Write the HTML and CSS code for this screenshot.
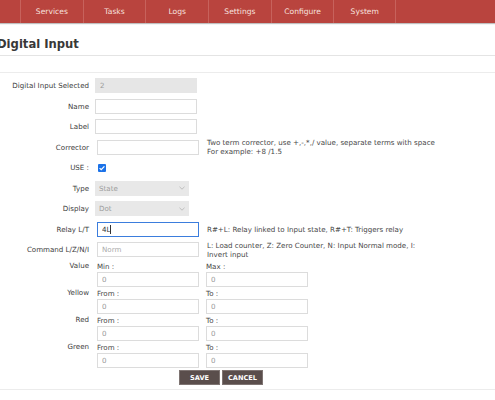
FILE: index.html
```html
<!DOCTYPE html>
<html lang="en">
<head>
  <meta charset="UTF-8">
  <title>Digital Input</title>
  <link rel="stylesheet" href="styles.css">
</head>
<body>
  <nav class="topnav">
    <a href="#">Services</a>
    <a href="#">Tasks</a>
    <a href="#">Logs</a>
    <a href="#">Settings</a>
    <a href="#">Configure</a>
    <a href="#">System</a>
  </nav>

  <div class="page-head">
    <h1>Digital Input</h1>
  </div>

  <form class="di-form">
    <div class="row">
      <label>Digital Input Selected</label>
      <input class="field" type="text" value="2" disabled>
    </div>
    <div class="row">
      <label for="di_name">Name</label>
      <input class="field" id="di_name" type="text">
    </div>
    <div class="row">
      <label for="di_label">Label</label>
      <input class="field" id="di_label" type="text">
    </div>
    <div class="row">
      <label for="di_corr">Corrector</label>
      <input class="field shifted" id="di_corr" type="text">
      <p class="help">Two term corrector, use +,-,*,/ value, separate terms with space<br>For example: +8 /1.5</p>
    </div>
    <div class="row">
      <label>USE :</label>
      <span class="check">
        <svg width="8" height="8" viewBox="0 0 8 8"><path d="M1.6 4.1 3.2 5.7 6.4 2.3" fill="none" stroke="#fff" stroke-width="1.2"/></svg>
      </span>
    </div>
    <div class="row">
      <label>Type</label>
      <div class="select">State <svg width="6" height="4" viewBox="0 0 6 4"><path d="M0.5 0.8 3 3.2 5.5 0.8" fill="none" stroke="#b3b3b3" stroke-width="0.8"/></svg></div>
    </div>
    <div class="row">
      <label>Display</label>
      <div class="select">Dot <svg width="6" height="4" viewBox="0 0 6 4"><path d="M0.5 0.8 3 3.2 5.5 0.8" fill="none" stroke="#b3b3b3" stroke-width="0.8"/></svg></div>
    </div>
    <div class="row">
      <label for="di_relay">Relay L/T</label>
      <span class="caret-wrap">
        <input class="field shifted active" id="di_relay" type="text" value="4L">
        <i class="caret"></i>
      </span>
      <p class="help">R#+L: Relay linked to Input state, R#+T: Triggers relay</p>
    </div>
    <div class="row">
      <label for="di_cmd">Command L/Z/N/I</label>
      <input class="field shifted" id="di_cmd" type="text" placeholder="Norm">
      <p class="help">L: Load counter, Z: Zero Counter, N: Input Normal mode, I: Invert input</p>
    </div>

    <div class="range-row first">
      <label>Value</label>
      <div class="cell"><span>Min :</span><input class="field" type="text" value="0"></div>
      <div class="cell"><span>Max :</span><input class="field" type="text" value="0"></div>
    </div>
    <div class="range-row">
      <label>Yellow</label>
      <div class="cell"><span>From :</span><input class="field" type="text" value="0"></div>
      <div class="cell"><span>To :</span><input class="field" type="text" value="0"></div>
    </div>
    <div class="range-row">
      <label>Red</label>
      <div class="cell"><span>From :</span><input class="field" type="text" value="0"></div>
      <div class="cell"><span>To :</span><input class="field" type="text" value="0"></div>
    </div>
    <div class="range-row">
      <label>Green</label>
      <div class="cell"><span>From :</span><input class="field" type="text" value="0"></div>
      <div class="cell"><span>To :</span><input class="field" type="text" value="0"></div>
    </div>

    <div class="actions">
      <button type="button">SAVE</button>
      <button type="button">CANCEL</button>
    </div>
  </form>
  <div class="page-foot"></div>
</body>
</html>
```

FILE: styles.css
```css
* { box-sizing: border-box; margin: 0; padding: 0 }
body {
  width: 495px;
  height: 400px;
  overflow: hidden;
  background: #fff;
  color: #3c3c3c;
  font-family: "DejaVu Sans", Verdana, sans-serif;
  font-size: 7.1px;
}

/* top menu */
.topnav {
  display: flex;
  height: 23px;
  padding-left: 20px;
  background: #b9443e;
  box-shadow: 0 1px 1px rgba(0,0,0,0.25);
}
.topnav a {
  width: 62.7px;
  line-height: 23px;
  text-align: center;
  color: #f7e1df;
  font-size: 7.6px;
  text-decoration: none;
  border-left: 1px solid #c7625c;
}
.topnav a:last-child { border-right: 1px solid #c7625c }

/* page heading */
.page-head {
  padding-top: 13px;
  padding-bottom: 16px;
  border-bottom: 1px solid #ececec;
}
.page-head h1 {
  margin-left: -3px;
  padding-bottom: 3px;
  border-bottom: 1px solid #e4e4e4;
  line-height: 16px;
  font-size: 11.6px;
  font-weight: bold;
  color: #383838;
}

/* form rows */
.di-form { padding-top: 5px }
.row {
  display: flex;
  align-items: center;
  height: 15px;
  margin-bottom: 5.5px;
}
.row label, .range-row label {
  width: 89px;
  flex: none;
  text-align: right;
  color: #3c3c3c;
}
.field {
  width: 102px;
  height: 15px;
  margin-left: 6px;
  padding: 0 4px;
  border: 1px solid #dcdcdc;
  background: #fff;
  font: inherit;
  color: #999;
  outline: none;
}
.field:disabled { background: #e6e6e6; border-color: #e6e6e6 }
.field::placeholder { color: #aaa }
.field.shifted { margin-left: 8px }
.field.active { border-color: #3b7ddd; color: #333 }
.caret-wrap { position: relative; display: flex }
.caret {
  position: absolute;
  left: 21px;
  top: 3px;
  width: 1px;
  height: 9px;
  background: #333;
}
.help {
  margin-left: 8px;
  width: 230px;
  line-height: 9px;
  color: #474747;
}
.check {
  display: flex;
  width: 8px;
  height: 8px;
  margin-left: 9px;
  border-radius: 1px;
  background: #1b72e8;
}
.select {
  display: flex;
  align-items: center;
  justify-content: space-between;
  width: 94px;
  height: 15px;
  margin-left: 6px;
  padding: 0 4px;
  background: #e8e8e8;
  color: #9d9d9d;
}

/* min/max and colour thresholds */
.range-row {
  display: flex;
  margin-bottom: 1px;
}
.range-row.first { margin-top: -1.5px }
.range-row label { line-height: 9px }
.range-row .cell {
  display: flex;
  flex-direction: column;
  margin-left: 8px;
}
.range-row .cell + .cell { margin-left: 7px }
.range-row .cell span { line-height: 11px; color: #474747 }
.range-row .field { margin-left: 0 }

.actions {
  display: flex;
  gap: 2px;
  padding-left: 179px;
  margin-top: 2px;
}
.actions button {
  width: 41px;
  height: 15px;
  border: 1px solid #7e7472;
  background: #5a4e4c;
  color: #fff;
  font: bold 6.6px "DejaVu Sans", Verdana, sans-serif;
}
.page-foot {
  margin-top: 4px;
  border-top: 1px solid #ececec;
}
```
